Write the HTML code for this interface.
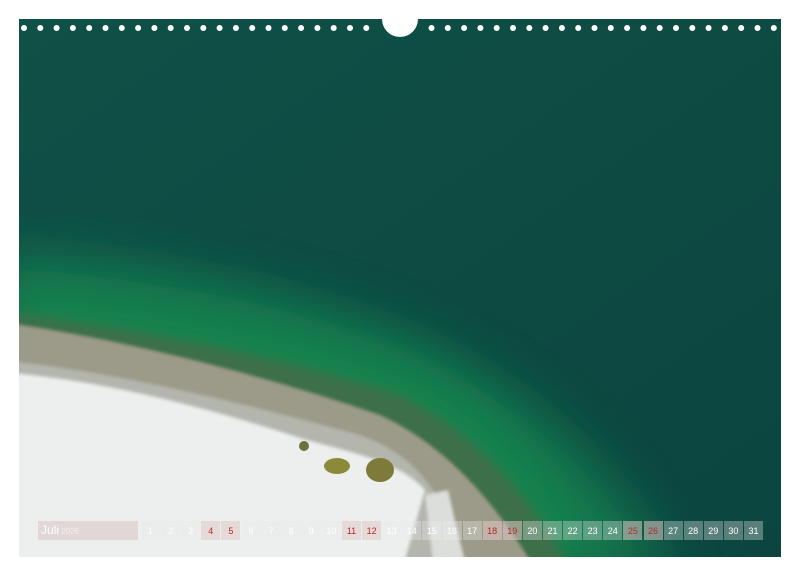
<!DOCTYPE html>
<html><head><style>
body{margin:0;width:800px;height:577px;background:#fff;position:relative;overflow:hidden;font-family:"Liberation Sans",sans-serif}
svg{position:absolute;left:0;top:0}
.cal{position:absolute;top:521px;height:19px}
.m{left:38px;width:100px;background:rgba(215,195,195,0.55);color:#fff;font-size:12px;line-height:19px}
.m b{font-weight:normal;margin-left:3px}
.m span{font-size:8px;color:#f4eeee;margin-left:2px}
.d{width:19px;background:rgba(235,235,235,0.35);color:#fff;font-size:9px;text-align:center;line-height:21px}
.d.r{color:#b32a2a;background:rgba(225,200,200,0.55)}
</style></head><body>
<svg width="800" height="577" viewBox="0 0 800 577">
<defs>
<linearGradient id="bg" x1="0" y1="0" x2="1" y2="1">
<stop offset="0" stop-color="#0f5047"/><stop offset="0.6" stop-color="#0d4a42"/><stop offset="1" stop-color="#0c4540"/></linearGradient>
<filter id="b1"><feGaussianBlur stdDeviation="25"/></filter>
<filter id="b2"><feGaussianBlur stdDeviation="5"/></filter>
<filter id="b3"><feGaussianBlur stdDeviation="1.5"/></filter>
<clipPath id="c"><rect x="19" y="19" width="762" height="538"/></clipPath>
</defs>
<g clip-path="url(#c)">
<rect x="19" y="19" width="762" height="538" fill="url(#bg)"/>
<path d="M0,250 C150,260 300,290 430,345 C540,400 610,460 680,577 L0,577Z" fill="#127a50" filter="url(#b1)" opacity="0.85"/>
<path d="M0,285 C150,295 300,320 420,370 C500,410 560,470 610,577 L0,577Z" fill="#16904f" filter="url(#b1)" opacity="0.6"/>
<path d="M0,312 C120,325 280,355 400,395 C470,430 530,490 575,577 L0,577Z" fill="#3e7048" filter="url(#b2)"/>
<path d="M0,322 C100,335 250,370 380,415 C445,445 495,500 540,577 L0,577Z" fill="#9c9a88" filter="url(#b3)"/>
<path d="M0,360 C120,372 250,405 360,435 C415,455 445,490 470,577 L0,577Z" fill="#b4b6ae" filter="url(#b3)"/>
<path d="M0,372 C100,380 200,405 300,438 C360,455 400,462 425,490 L400,577 L0,577Z" fill="#ecefed" filter="url(#b3)"/>
<path d="M425,495 L448,490 L468,577 L435,577Z" fill="#dcdedc" filter="url(#b3)"/>
<ellipse cx="337" cy="466" rx="13" ry="8" fill="#8a8a3a"/>
<ellipse cx="380" cy="470" rx="14" ry="12" fill="#7d7a3a"/>
<ellipse cx="304" cy="446" rx="5" ry="5" fill="#6a7040"/>
</g>
<path d="M382,19 A18,18 0 0 0 418,19Z" fill="#fff"/>
<g id="dots" fill="#fff"></g>
</svg>
<div class="cal m"><b>Juli</b><span>2026</span></div>
<div id="days"></div>
<script>
var g=document.getElementById('dots'),s='';
for(var i=0;i<47;i++){var x=24+i*16.3;if(x>377&&x<423)continue;if(x>778)break;s+='<circle cx="'+x+'" cy="28" r="3"/>';}
g.innerHTML=s;
var red=[4,5,11,12,18,19,25,26],h='';
for(var n=1;n<=31;n++){var x=141+(n-1)*20.1;h+='<div class="cal d'+(red.indexOf(n)>=0?' r':'')+'" style="left:'+x.toFixed(1)+'px">'+n+'</div>';}
document.getElementById('days').innerHTML=h;
</script>
</body></html>
